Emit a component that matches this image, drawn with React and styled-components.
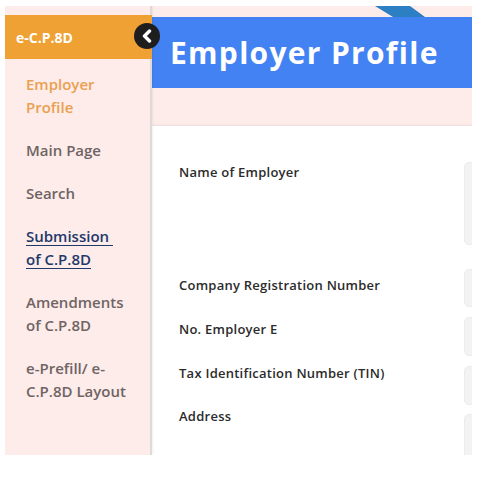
import React from "react";
import styled, { createGlobalStyle } from "styled-components";

const GlobalStyle = createGlobalStyle`
  body {
    margin: 0;
    background: #fff;
    font-family: "Open Sans", "Liberation Sans", sans-serif;
  }
`;

const menu = [
  { lines: ["Employer", "Profile"], tone: "active" },
  { lines: ["Main Page"] },
  { lines: ["Search"] },
  { lines: ["Submission ", "of C.P.8D"], tone: "link" },
  { lines: ["Amendments", "of C.P.8D"] },
  { lines: ["e-Prefill/ e-", "C.P.8D Layout"] },
];

const labels = [
  { text: "Name of Employer", space: 97 },
  { text: "Company Registration Number", space: 28 },
  { text: "No. Employer E", space: 28 },
  { text: "Tax Identification Number (TIN)", space: 27 },
  { text: "Address", space: 0 },
];

const fields = [
  { h: 83, gap: 24 },
  { h: 38, gap: 10 },
  { h: 39, gap: 10 },
  { h: 39, gap: 9 },
  { h: 60, gap: 0 },
];

export default function App() {
  return (
    <>
      <GlobalStyle />
      <Frame>
        <Sidebar>
          <SideHeader>e-C.P.8D</SideHeader>
          <Toggle>
            <svg width="12" height="14" viewBox="0 0 12 14">
              <path
                d="M8.5 2 L3.5 7 L8.5 12"
                fill="none"
                stroke="#fff"
                strokeWidth="3.4"
                strokeLinecap="round"
                strokeLinejoin="round"
              />
            </svg>
          </Toggle>
          <Menu>
            {menu.map((item, i) => (
              <MenuItem key={i} $tone={item.tone}>
                {item.lines.map((l, j) => (
                  <React.Fragment key={j}>
                    {j > 0 && <br />}
                    {l}
                  </React.Fragment>
                ))}
              </MenuItem>
            ))}
          </Menu>
        </Sidebar>
        <Main>
          <Banner>
            <Stripe width="60" height="11" viewBox="0 0 60 11">
              <polygon points="0,0 35,0 50,11 18,11" fill="#2c7fc3" />
            </Stripe>
            <Title>Employer Profile</Title>
          </Banner>
          <Content>
            <Labels>
              {labels.map((l, i) => (
                <Label key={i} $space={l.space}>
                  {l.text}
                </Label>
              ))}
            </Labels>
            <Fields>
              {fields.map((f, i) => (
                <Field key={i} $h={f.h} $gap={f.gap} />
              ))}
            </Fields>
          </Content>
        </Main>
      </Frame>
    </>
  );
}

const Frame = styled.div`
  margin: 6px 0 0 5px;
  width: 467px;
  height: 449px;
  overflow: hidden;
  display: flex;
  background: #fdecea;
`;

const Sidebar = styled.aside`
  position: relative;
  width: 147px;
  flex-shrink: 0;
  box-sizing: border-box;
  padding-top: 9px;
  background: #fdecea;
  border-right: 2px solid #dedad9;
  box-shadow: 1px 0 2px rgba(0, 0, 0, 0.06);
  z-index: 2;
`;

const SideHeader = styled.div`
  height: 44px;
  box-sizing: border-box;
  padding-left: 11px;
  display: flex;
  align-items: center;
  background: #f0a133;
  color: #fff;
  font-size: 14px;
  font-weight: 700;
  margin-right: -2px;
`;

const Toggle = styled.div`
  position: absolute;
  left: 129px;
  top: 17px;
  width: 26px;
  height: 26px;
  border-radius: 50%;
  background: #1e1e1e;
  display: flex;
  align-items: center;
  justify-content: center;
`;

const Menu = styled.nav`
  display: flex;
  flex-direction: column;
  padding: 4px 20px 0 21px;
`;

const toneColor = {
  active: "#eaa050",
  link: "#21386a",
};

const MenuItem = styled.div`
  padding: 10px 0;
  font-size: 15px;
  font-weight: 600;
  line-height: 23px;
  white-space: pre;
  color: ${(p) => toneColor[p.$tone] || "#6f6463"};
  text-decoration: ${(p) => (p.$tone === "link" ? "underline" : "none")};
  text-underline-offset: 3px;
`;

const Main = styled.main`
  flex: 1;
  display: flex;
  flex-direction: column;
  min-width: 0;
`;

const Banner = styled.div`
  position: relative;
  padding: 11px 0 38px;
`;

const Stripe = styled.svg`
  position: absolute;
  left: 223px;
  top: 0;
`;

const Title = styled.h1`
  margin: 0;
  height: 71px;
  display: flex;
  align-items: center;
  padding-left: 18px;
  background: #4382f2;
  color: #fff;
  font-size: 30px;
  font-weight: 700;
  letter-spacing: 1.3px;
`;

const Content = styled.section`
  flex: 1;
  display: flex;
  background: #fff;
  box-shadow: 0 -1px 2px rgba(0, 0, 0, 0.07);
  padding: 36px 0 0 27px;
`;

const Labels = styled.div`
  width: 285px;
  flex-shrink: 0;
  padding-top: 2px;
  display: flex;
  flex-direction: column;
`;

const Label = styled.div`
  font-size: 13px;
  font-weight: 600;
  line-height: 16px;
  letter-spacing: 0.25px;
  color: #2b2b2b;
  margin-bottom: ${(p) => p.$space}px;
`;

const Fields = styled.div`
  flex: 1;
  display: flex;
  flex-direction: column;
`;

const Field = styled.div`
  width: 200px;
  height: ${(p) => p.$h}px;
  margin-bottom: ${(p) => p.$gap}px;
  box-sizing: border-box;
  background: #f3f3f3;
  border: 1px solid #ececec;
  border-radius: 5px;
`;
